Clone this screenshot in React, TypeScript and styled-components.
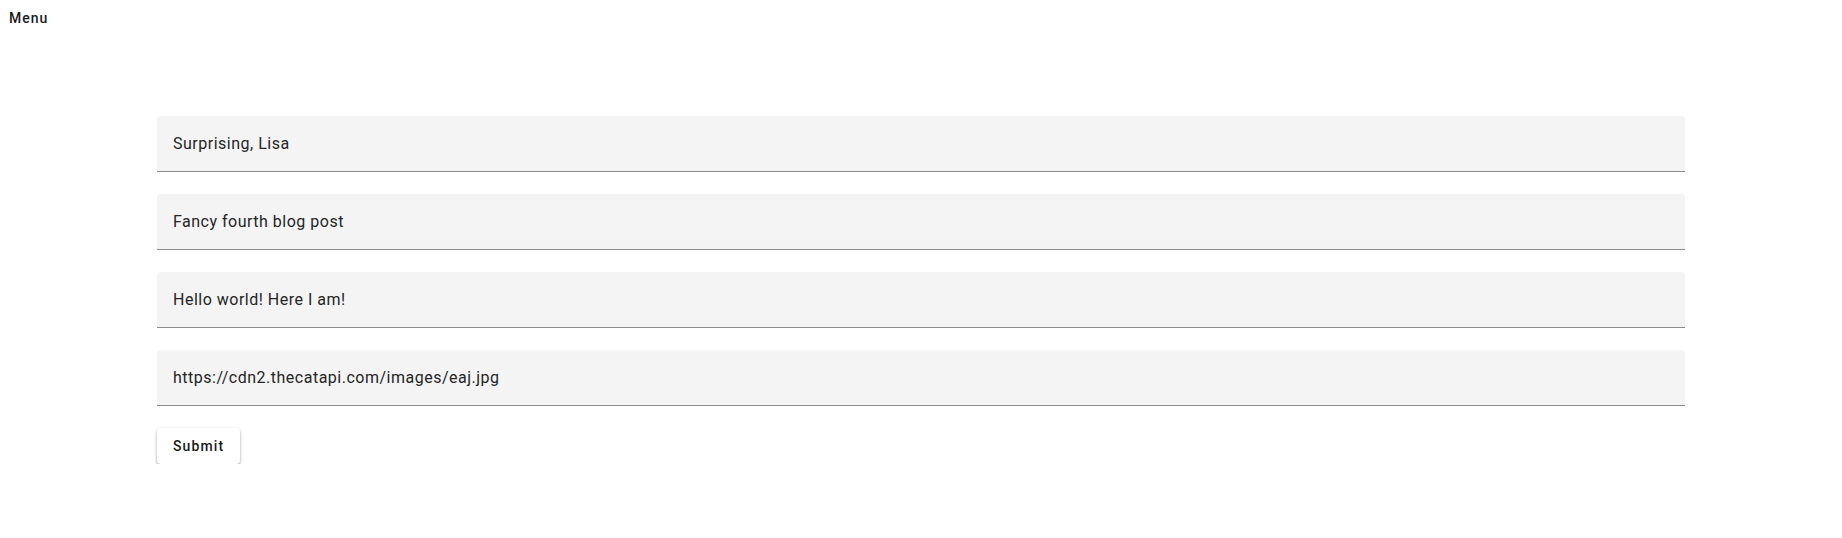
import React from "react";
import styled, { createGlobalStyle } from "styled-components";

const GlobalStyle = createGlobalStyle`
    html, body {
        margin: 0;
        padding: 0;
        background: #ffffff;
        font-family: Roboto, "Helvetica Neue", Arial, sans-serif;
    }
`;

const Page = styled.div`
    display: flex;
    flex-direction: column;
`;

const TopBar = styled.nav`
    display: flex;
    align-items: center;
    height: 36px;
    padding: 0 9px;
`;

const MenuButton = styled.button`
    border: none;
    background: none;
    padding: 0;
    font-family: Roboto, sans-serif;
    font-size: 14px;
    font-weight: 500;
    letter-spacing: 0.07em;
    color: #1a1a1a;
    cursor: pointer;
`;

const Form = styled.form`
    display: flex;
    flex-direction: column;
    align-items: flex-start;
    gap: 22px;
    margin: 80px 157px 0;
`;

const Field = styled.div`
    width: 100%;
    box-sizing: border-box;
    background: #f4f4f4;
    border-radius: 4px 4px 0 0;
    border-bottom: 1px solid #8c8c8c;
`;

const Input = styled.input`
    display: block;
    width: 100%;
    box-sizing: border-box;
    height: 55px;
    padding: 0 16px;
    border: none;
    outline: none;
    background: transparent;
    font-family: Roboto, sans-serif;
    font-size: 16px;
    letter-spacing: 0.5px;
    color: #252525;
`;

const SubmitButton = styled.button`
    height: 36px;
    padding: 0 16px;
    border: none;
    border-radius: 4px;
    background: #ffffff;
    box-shadow: 0 2px 3px rgba(0, 0, 0, 0.28), 0 1px 4px rgba(0, 0, 0, 0.1);
    font-family: Roboto, sans-serif;
    font-size: 14px;
    font-weight: 500;
    letter-spacing: 0.08em;
    color: #1a1a1a;
    cursor: pointer;
`;

const values = [
    "Surprising, Lisa",
    "Fancy fourth blog post",
    "Hello world! Here I am!",
    "https://cdn2.thecatapi.com/images/eaj.jpg",
];

const App = () => {
    return (
        <Page>
            <GlobalStyle />
            <TopBar>
                <MenuButton>Menu</MenuButton>
            </TopBar>
            <Form onSubmit={(e) => e.preventDefault()}>
                {values.map((v) => (
                    <Field key={v}>
                        <Input defaultValue={v} />
                    </Field>
                ))}
                <SubmitButton type="submit">Submit</SubmitButton>
            </Form>
        </Page>
    );
};

export default App;
